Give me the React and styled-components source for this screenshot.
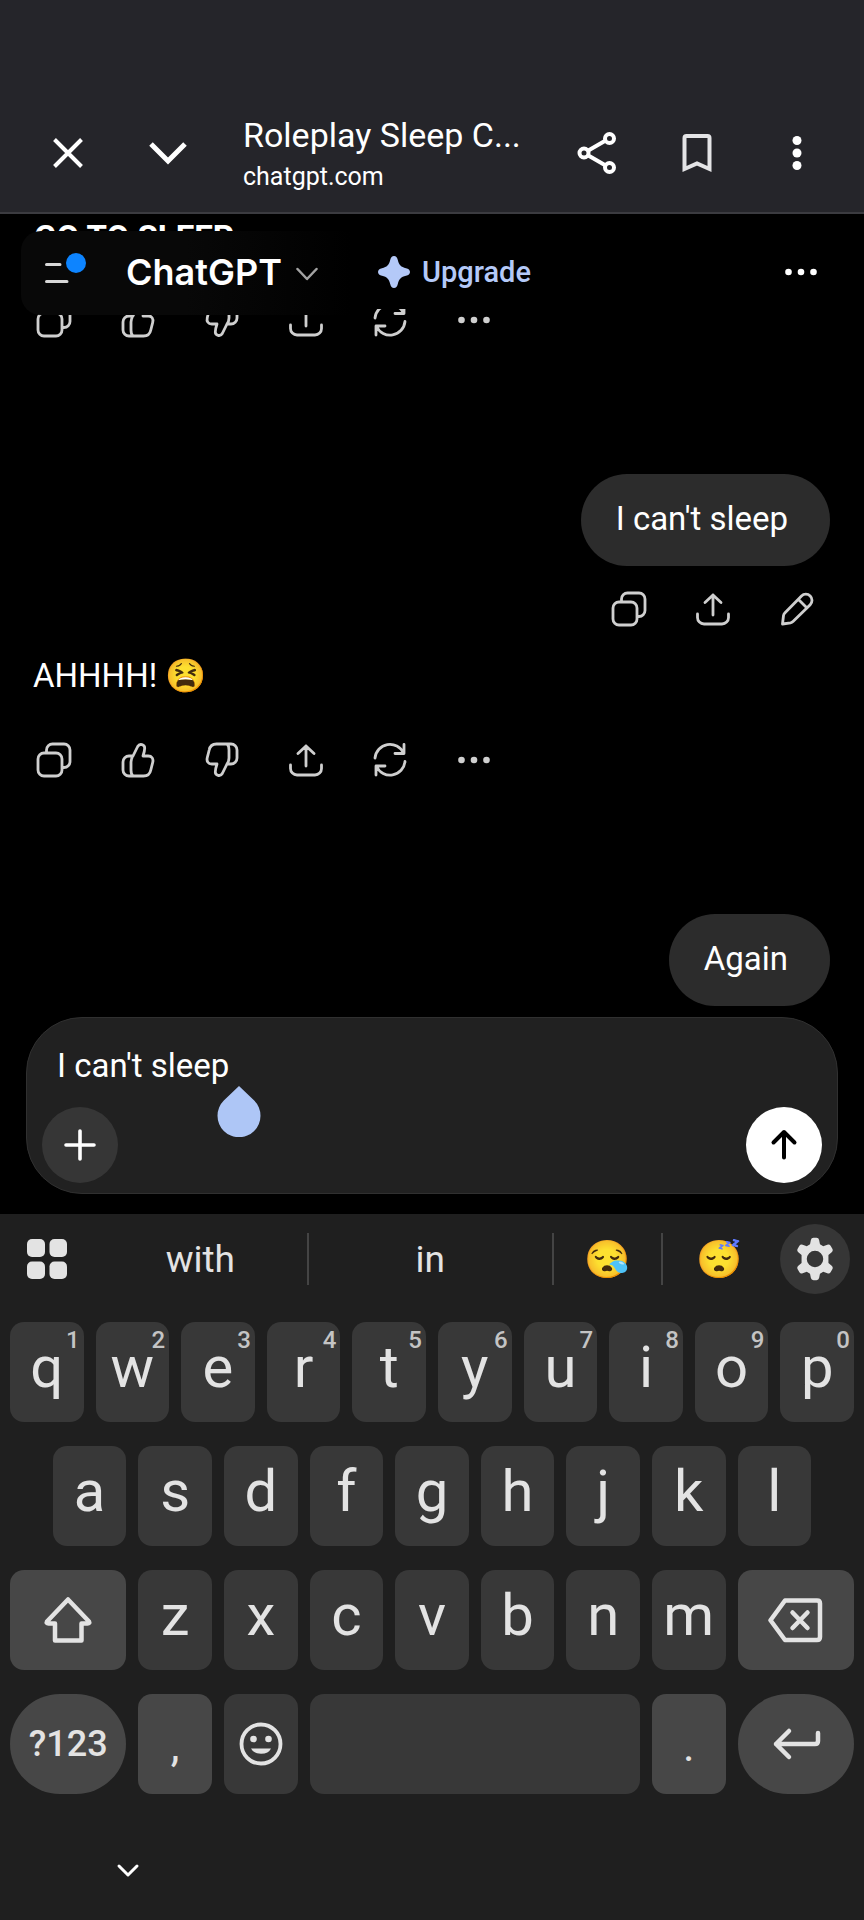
import styled, { createGlobalStyle, css } from "styled-components";

const GlobalStyle = createGlobalStyle`
  *, *::before, *::after { box-sizing: border-box; }
  body {
    margin: 0;
    background: #000;
    font-family: Roboto, "Liberation Sans", "Noto Color Emoji", sans-serif;
    color: #fff;
  }
  button, textarea { font: inherit; color: inherit; }
  p, h1, h2 { margin: 0; }
`;

const Page = styled.div`
  min-height: 100vh;
  display: flex;
  flex-direction: column;
`;

const IconButton = styled.button`
  display: flex;
  align-items: center;
  justify-content: center;
  flex: none;
  padding: 0;
  border: none;
  background: none;
  cursor: pointer;
`;

/* browser bar */
const BrowserBar = styled.header`
  display: flex;
  align-items: center;
  height: 214px;
  padding: 94px 17px 0 18px;
  background: #25252a;
  border-bottom: 2px solid #3b3b40;
  flex: none;
`;

const BarButton = styled(IconButton)`
  width: 100px;
  height: 100px;
`;

const PageInfo = styled.div`
  flex: 1;
  min-width: 0;
  padding: 5px 0 0 25px;
`;

const PageTitle = styled.h1`
  font-size: 34px;
  line-height: 42px;
  font-weight: 400;
  white-space: nowrap;
`;

const PageHost = styled.p`
  font-size: 25px;
  line-height: 42px;
`;

/* chat */
const Chat = styled.main`
  position: relative;
  flex: 1;
  display: flex;
  flex-direction: column;
  justify-content: flex-end;
  overflow: hidden;
  min-height: 803px;
  padding-bottom: 11px;
`;

const ChatHeader = styled.div`
  position: absolute;
  top: 17px;
  left: 21px;
  right: 21px;
  display: flex;
  align-items: flex-start;
`;

const HeaderLeft = styled.div`
  display: flex;
  align-items: center;
  height: 84px;
  width: 330px;
  padding: 0 23px 2px;
  gap: 40px;
  border-radius: 20px 0 0 20px;
  background: linear-gradient(90deg, #080808 50%, #000);
`;

const ModelButton = styled(IconButton)`
  gap: 14px;
  font-family: Inter, sans-serif;
  font-size: 36px;
  font-weight: 600;
`;

const UpgradeButton = styled(IconButton)`
  height: 78px;
  padding-left: 27px;
  padding-top: 4px;
  gap: 12px;
  background: #000;
  color: #b4c9f8;
  font-size: 29px;
  font-weight: 500;
`;

const HeaderMore = styled(IconButton)`
  width: 84px;
  height: 82px;
  margin-left: auto;
`;

const Reply = styled.p`
  padding: 0 33px;
  font-size: 33px;
  line-height: 40px;
`;

const ReplyHeading = styled.h2`
  padding: 0 34px;
  font-size: 33px;
  line-height: 36px;
  font-weight: 700;
`;

const Bubble = styled.p`
  align-self: flex-end;
  margin: 118px 34px 0;
  padding: 25px 42px 27px 35px;
  border-radius: 46px;
  background: #2c2c2c;
  font-size: 33px;
  line-height: 40px;
`;

const Actions = styled.div`
  display: flex;
  padding: 0 25px 0 12px;
  color: #cfcfcf;
  ${({ $mine }) =>
    $mine
      ? css`
          justify-content: flex-end;
          margin: 7px 0 11px;
        `
      : css`
          margin-top: 28px;
        `}
`;

const ActionButton = styled(IconButton)`
  width: 84px;
  height: 72px;
`;

/* composer */
const Dock = styled.div`
  flex: none;
  padding: 0 26px 20px;
`;

const Composer = styled.form`
  position: relative;
  padding: 24px 15px 10px;
  border: 1px solid #303030;
  border-radius: 56px;
  background: #212121;
`;

const Prompt = styled.textarea`
  display: block;
  width: 100%;
  height: 48px;
  padding: 0 15px;
  border: none;
  outline: none;
  resize: none;
  overflow: hidden;
  background: none;
  font-size: 33px;
  line-height: 48px;
`;

const ComposerRow = styled.div`
  display: flex;
  justify-content: space-between;
  margin-top: 17px;
`;

const RoundButton = styled(IconButton)`
  width: 76px;
  height: 76px;
  border-radius: 50%;
  background: ${({ $send }) => ($send ? "#fff" : "#363636")};
  color: ${({ $send }) => ($send ? "#000" : "#fff")};
`;

const CaretHandle = styled.svg`
  position: absolute;
  left: 190px;
  top: 67px;
`;

/* keyboard */
const Keyboard = styled.section`
  flex: none;
  background: #1f1f1f;
  color: #e3e3e3;
`;

const Suggestions = styled.div`
  display: grid;
  grid-template-columns: 94px 7fr 8fr 109px 112px 89px;
  align-items: center;
  height: 90px;
`;

const Suggestion = styled(IconButton)`
  height: 52px;
  font-size: 37px;
  border-right: ${({ $divider }) => ($divider ? "2px solid #444" : "none")};
`;

const SettingsButton = styled(IconButton)`
  width: 70px;
  height: 70px;
  margin-left: 5px;
  border-radius: 50%;
  background: #363636;
`;

const Keys = styled.div`
  display: grid;
  grid-template-columns: repeat(20, 1fr);
  gap: 24px 12px;
  padding: 18px 10px 0;
`;

const Key = styled.button`
  position: relative;
  display: flex;
  align-items: center;
  justify-content: center;
  height: 100px;
  padding: 0 0 10px;
  border: none;
  border-radius: ${({ $round }) => ($round ? 50 : 14)}px;
  background: ${({ $tone }) => ($tone === "light" ? "#474747" : "#383838")};
  grid-column: ${({ $start }) => $start || "auto"} / span ${({ $span }) => $span || 2};
  font-size: 58px;
  ${({ $label }) =>
    $label &&
    css`
      font-size: 36px;
      font-weight: 500;
      padding: 0;
    `}
  ${({ $mark }) =>
    $mark &&
    css`
      font-size: 44px;
      padding: 4px 0 0;
    `}
  ${({ $icon }) => $icon && "padding: 0;"}
`;

const KeyHint = styled.span`
  position: absolute;
  top: 4px;
  right: 4px;
  font-size: 24px;
  line-height: 28px;
  font-weight: 500;
  color: #c4c4c4;
`;

const NavBar = styled.div`
  height: 127px;
  padding: 47px 98px 0;
`;

const HideButton = styled(IconButton)`
  width: 60px;
  height: 60px;
`;

function Icon({ size = 36, width = 3, children, ...rest }) {
  return (
    <svg
      width={size}
      height={size}
      viewBox={`0 0 ${size} ${size}`}
      fill="none"
      stroke="currentColor"
      strokeWidth={width}
      strokeLinecap="round"
      strokeLinejoin="round"
      aria-hidden="true"
      {...rest}
    >
      {children}
    </svg>
  );
}

const Dots = () => (
  <Icon fill="currentColor" stroke="none">
    <circle cx="5.5" cy="18" r="3.3" />
    <circle cx="18" cy="18" r="3.3" />
    <circle cx="30.5" cy="18" r="3.3" />
  </Icon>
);

const CopyIcon = () => (
  <Icon width={2.8}>
    <rect x="2" y="11" width="24" height="23" rx="6" />
    <path d="M10.5 10.5V8a6 6 0 0 1 6-6H28a6 6 0 0 1 6 6v11.500a6 6 0 0 1-6 6h-1.500" />
  </Icon>
);

// hand outline with a separate cuff line, flipped for the "bad" one
const ThumbIcon = ({ down }) => (
  <Icon width={2.8} transform={down ? "rotate(180)" : undefined}>
    <path d="M13 14H9a6 6 0 0 0-6 6v8a6 6 0 0 0 6 6h14.500c4 0 6.500-2 7.300-6l1.900-7.500c1-4-1-6.500-4.500-6.500h-5.200c1-3 1.700-5.500 1.700-8 0-3.500-5-5-7-1.500l-4.700 9.500c-1.500 2-2 3.500-2 6v8c0 3 .5 5 2 6" />
  </Icon>
);

const UploadIcon = () => (
  <Icon width={2.8}>
    <path d="M18 24V4M10 11.500L18 4l8 7.500M2.500 23v3.500a6.500 6.500 0 0 0 6.500 6.500h18a6.500 6.500 0 0 0 6.500-6.500V23" />
  </Icon>
);

const RetryIcon = () => (
  <Icon width={2.8}>
    <path d="M3 16A15 15 0 0 1 31.500 11M32 2.500v9h-9M33 19.500A15 15 0 0 1 4.500 24.500M4 33v-9h9" />
  </Icon>
);

const EditIcon = () => (
  <Icon width={2.8}>
    <path d="M3.500 33l1-8.500c.2-1 .6-1.800 1.300-2.500L22.500 5a6 6 0 0 1 8.700 8.700L14 30.500c-.7.7-1.500 1.100-2.500 1.300zM19.500 8.500l8 8" />
  </Icon>
);

function ReplyActions() {
  return (
    <Actions>
      <ActionButton aria-label="Copy"><CopyIcon /></ActionButton>
      <ActionButton aria-label="Good response"><ThumbIcon /></ActionButton>
      <ActionButton aria-label="Bad response"><ThumbIcon down /></ActionButton>
      <ActionButton aria-label="Share"><UploadIcon /></ActionButton>
      <ActionButton aria-label="Try again"><RetryIcon /></ActionButton>
      <ActionButton aria-label="More"><Dots /></ActionButton>
    </Actions>
  );
}

const topRow = [..."qwertyuiop"];
const middleRow = [..."asdfghjkl"];
const bottomRow = [..."zxcvbnm"];

export default function App() {
  return (
    <Page>
      <GlobalStyle />
      <BrowserBar>
        <BarButton aria-label="Close">
          <Icon width={4} strokeLinecap="butt">
            <path d="M4.500 4.500l27 27M31.500 4.500l-27 27" />
          </Icon>
        </BarButton>
        <BarButton aria-label="Minimize">
          <Icon size={40} width={5} strokeLinecap="butt" strokeLinejoin="miter">
            <path d="M3 11l17 17 17-17" />
          </Icon>
        </BarButton>
        <PageInfo>
          <PageTitle>Roleplay Sleep C...</PageTitle>
          <PageHost>chatgpt.com</PageHost>
        </PageInfo>
        <BarButton aria-label="Share page">
          <Icon size={44} width={4}>
            <path d="M9 22L35 7M9 22l26 15" />
            <circle cx="9" cy="22" r="4.500" fill="#25252a" />
            <circle cx="34.500" cy="7.500" r="4.500" fill="#25252a" />
            <circle cx="34.500" cy="36.500" r="4.500" fill="#25252a" />
          </Icon>
        </BarButton>
        <BarButton aria-label="Bookmark">
          <Icon size={40} width={4} stroke="#e4e4e6" strokeLinejoin="miter" strokeLinecap="butt">
            <path d="M7.500 36V5a2 2 0 0 1 2-2h21a2 2 0 0 1 2 2v31L20 30.500z" />
          </Icon>
        </BarButton>
        <BarButton aria-label="Menu">
          <Icon size={40} fill="currentColor" stroke="none">
            <circle cx="20" cy="7.500" r="4.500" />
            <circle cx="20" cy="20" r="4.500" />
            <circle cx="20" cy="32.500" r="4.500" />
          </Icon>
        </BarButton>
      </BrowserBar>

      <Chat>
        <ReplyHeading>GO TO SLEEP</ReplyHeading>
        <ReplyActions />
        <Bubble>I can't sleep</Bubble>
        <Actions $mine>
          <ActionButton aria-label="Copy"><CopyIcon /></ActionButton>
          <ActionButton aria-label="Share"><UploadIcon /></ActionButton>
          <ActionButton aria-label="Edit"><EditIcon /></ActionButton>
        </Actions>
        <Reply>AHHHH! 😫</Reply>
        <ReplyActions />
        <Bubble>Again</Bubble>

        <ChatHeader>
          <HeaderLeft>
            <IconButton aria-label="Open sidebar">
              <Icon size={42} stroke="#d8d8d8">
                <path d="M2.500 13.500H16M2.500 30.500H23" />
                <circle cx="32" cy="12" r="10" fill="#0d84ff" stroke="none" />
              </Icon>
            </IconButton>
            <ModelButton>
              ChatGPT
              <Icon size={22} width={2.500} stroke="#a3a3a3">
                <path d="M1.500 8l9.500 10 9.500-10" />
              </Icon>
            </ModelButton>
          </HeaderLeft>
          <UpgradeButton>
            <Icon size={32} fill="currentColor" stroke="none">
              <path d="M16 0c2 0 3.200 1.500 3.800 4 1.200 5 3.200 7 8.200 8.200 2.500.6 4 1.800 4 3.800s-1.500 3.200-4 3.800c-5 1.200-7 3.200-8.200 8.200-.6 2.500-1.800 4-3.800 4s-3.200-1.500-3.800-4c-1.200-5-3.200-7-8.200-8.200C1.500 19.200 0 18 0 16s1.500-3.200 4-3.800c5-1.200 7-3.200 8.200-8.200.6-2.500 1.800-4 3.800-4z" />
            </Icon>
            Upgrade
          </UpgradeButton>
          <HeaderMore aria-label="Conversation options"><Dots /></HeaderMore>
        </ChatHeader>
      </Chat>

      <Dock>
        <Composer>
          <Prompt aria-label="Message" defaultValue="I can't sleep" />
          <ComposerRow>
            <RoundButton type="button" aria-label="Add">
              <Icon width={3.6}>
                <path d="M18 4v28M4 18h28" />
              </Icon>
            </RoundButton>
            <RoundButton type="button" $send aria-label="Send">
              <Icon width={4}>
                <path d="M18 30.500V5M7.500 15.500L18 5l10.500 10.500" />
              </Icon>
            </RoundButton>
          </ComposerRow>
          <CaretHandle width="44" height="52" viewBox="0 0 44 52" aria-hidden="true">
            <path d="M22 1L37.200 15.500a21.500 21.500 0 1 1-30.400 0z" fill="#aec6f6" />
          </CaretHandle>
        </Composer>
      </Dock>

      <Keyboard>
        <Suggestions>
          <IconButton aria-label="Keyboard menu">
            <Icon size={40} fill="currentColor" stroke="none">
              <rect width="18" height="18" rx="5" />
              <rect x="22.500" width="17.500" height="18" rx="5" />
              <rect y="22.500" width="18" height="17.500" rx="5" />
              <rect x="22.500" y="22.500" width="17.500" height="17.500" rx="5" />
            </Icon>
          </IconButton>
          <Suggestion $divider>with</Suggestion>
          <Suggestion $divider>in</Suggestion>
          <Suggestion $divider>😪</Suggestion>
          <Suggestion>😴</Suggestion>
          <SettingsButton aria-label="Keyboard settings">
            <svg width="52" height="52" viewBox="0 0 24 24" fill="currentColor" aria-hidden="true">
              {/* six chunky teeth round a ring */}
              <path d="M10.100 3.200q.2-1 1.200-1h1.400q1 0 1.200 1l.4 2 1.500.9 1.900-.7q1-.3 1.500.5l.8 1.400q.5.9-.3 1.600l-1.500 1.300v3.600l1.500 1.300q.8.7.3 1.600l-.8 1.400q-.5.8-1.500.5l-1.900-.7-1.500.9-.4 2q-.2 1-1.200 1h-1.400q-1 0-1.200-1l-.4-2-1.500-.9-1.900.7q-1 .3-1.500-.5l-.8-1.400q-.5-.9.3-1.600l1.500-1.300v-3.600l-1.500-1.300q-.8-.7-.3-1.600l.8-1.400q.5-.8 1.500-.5l1.900.7 1.500-.9zM12 8.200a3.800 3.800 0 1 0 0 7.600 3.800 3.800 0 0 0 0-7.600z" fillRule="evenodd" />
            </svg>
          </SettingsButton>
        </Suggestions>

        <Keys>
          {topRow.map((letter, i) => (
            <Key key={letter}>
              {letter}
              <KeyHint>{(i + 1) % 10}</KeyHint>
            </Key>
          ))}
          {middleRow.map((letter, i) => (
            <Key key={letter} $start={i === 0 ? 2 : undefined}>
              {letter}
            </Key>
          ))}
          <Key $start={1} $span={3} $tone="light" $icon aria-label="Shift">
            <Icon size={50} width={4.500}>
              <path d="M25 4.500L46 26.500q1 2-1.500 2H38.500V45.500H12V28.500H5.500q-2.500 0-1.500-2z" />
            </Icon>
          </Key>
          {bottomRow.map((letter) => (
            <Key key={letter}>{letter}</Key>
          ))}
          <Key $span={3} $tone="light" $icon aria-label="Backspace">
            <Icon size={56} width={4.500}>
              <path d="M17 8.500H49q3 0 3 3V45q0 3-3 3H17L2.500 28.250z" />
              <path d="M24.500 20.500l15 15.500M39.500 20.500l-15 15.500" />
            </Icon>
          </Key>
          <Key $span={3} $tone="light" $round $label>?123</Key>
          <Key $tone="light" $mark>,</Key>
          <Key $icon aria-label="Emoji">
            <Icon size={44} width={3.800}>
              <circle cx="22" cy="22" r="19.500" />
              <circle cx="14.500" cy="17" r="3.300" fill="currentColor" stroke="none" />
              <circle cx="29.500" cy="17" r="3.300" fill="currentColor" stroke="none" />
              <path d="M12 26.500h20a10.500 7.500 0 0 1-20 0z" fill="currentColor" stroke="none" />
            </Icon>
          </Key>
          <Key $span={8} aria-label="Space" />
          <Key $tone="light" $mark>.</Key>
          <Key $span={3} $tone="light" $round $icon aria-label="Enter">
            <Icon size={50} width={4.500}>
              <path d="M18 12L5 25l13 13M5 25H44q3 0 3-3V14" />
            </Icon>
          </Key>
        </Keys>

        <NavBar>
          <HideButton aria-label="Hide keyboard">
            <Icon size={24} width={3} stroke="#fff">
              <path d="M3 7l9 9 9-9" />
            </Icon>
          </HideButton>
        </NavBar>
      </Keyboard>
    </Page>
  );
}
